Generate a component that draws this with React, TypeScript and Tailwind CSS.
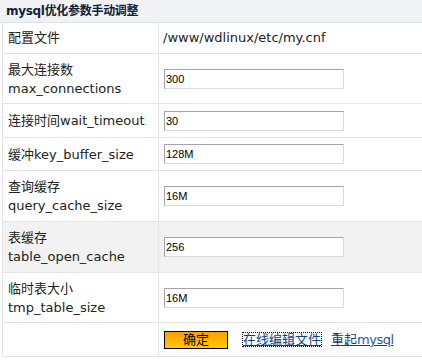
import React from "react";

// Row data: label lines, value, row height (incl. bottom border), shaded?
type Row = {
  cn: string;
  en?: string;
  inline?: boolean;
  value: string;
  h: string;
  shaded?: boolean;
};

const ROWS: Row[] = [
  { cn: "最大连接数", en: "max_connections", value: "300", h: "h-[50px]" },
  { cn: "连接时间", en: "wait_timeout", inline: true, value: "30", h: "h-[34px]" },
  { cn: "缓冲", en: "key_buffer_size", inline: true, value: "128M", h: "h-[33px]" },
  { cn: "查询缓存", en: "query_cache_size", value: "16M", h: "h-[51px]" },
  { cn: "表缓存", en: "table_open_cache", value: "256", h: "h-[51px]", shaded: true },
  { cn: "临时表大小", en: "tmp_table_size", value: "16M", h: "h-[50px]" },
];

const FONT = "font-['DejaVu_Sans','Noto_Sans_CJK_SC',sans-serif]";

function ParamRow({ row }: { row: Row }) {
  return (
    <div
      className={`ml-[2px] flex border-b border-l border-[#e3e3e8] ${row.h} ${row.shaded ? "bg-[#f2f2f2]" : "bg-white"}`}
    >
      <div className="flex w-[156px] shrink-0 flex-col justify-center border-r border-[#e3e3e8] pl-[5px] text-[13px] leading-[19px] text-[#222]">
        {row.inline ? (
          <span>
            {row.cn}
            {row.en}
          </span>
        ) : (
          <>
            <span>{row.cn}</span>
            <span>{row.en}</span>
          </>
        )}
      </div>
      <div className="flex flex-1 items-center pl-[5px]">
        <input
          readOnly
          defaultValue={row.value}
          className="h-[20px] w-[180px] border border-t-[#a3a3a8] border-l-[#a3a3a8] border-r-[#d9d9e2] border-b-[#d9d9e2] bg-white px-[1px] font-['Liberation_Sans',sans-serif] text-[11px] text-black outline-none"
        />
      </div>
    </div>
  );
}

export default function App() {
  return (
    <div className={`w-[422px] bg-white ${FONT}`}>
      <div className="flex h-[23px] items-center border-b border-[#dbe2ea] bg-[#f1f2f4] pl-[6px] text-[12px] font-bold tracking-[-0.3px] text-[#0f2236]">
        mysql优化参数手动调整
      </div>

      <div className="ml-[2px] flex h-[31px] border-b border-l border-[#e3e3e8]">
        <div className="flex w-[156px] shrink-0 items-center border-r border-[#e3e3e8] pl-[5px] text-[13px] text-[#222]">
          配置文件
        </div>
        <div className="flex flex-1 items-center pl-[4px] text-[13px] text-[#222]">
          /www/wdlinux/etc/my.cnf
        </div>
      </div>

      {ROWS.map((r) => (
        <ParamRow key={r.en} row={r} />
      ))}

      <div className="ml-[2px] flex h-[34px] border-b border-l border-[#e3e3e8]">
        <div className="w-[156px] shrink-0 border-r border-[#e3e3e8]" />
        <div className="flex flex-1 items-center pl-[5px] text-[13px]">
          <button className="h-[18px] w-[64px] border border-black bg-gradient-to-b from-[#ff9c00] to-[#ffcc00] text-[13px] leading-[16px] text-black">
            确定
          </button>
          <a
            href="#"
            className="ml-[15px] leading-[13px] text-[#0d3f8c] underline outline-1 outline-dotted outline-black"
          >
            在线编辑文件
          </a>
          <a href="#" className="ml-[10px] text-[#0d3f8c] underline">
            重起<span className="tracking-[-0.5px] text-[#2458ad]">mysql</span>
          </a>
        </div>
      </div>
    </div>
  );
}
